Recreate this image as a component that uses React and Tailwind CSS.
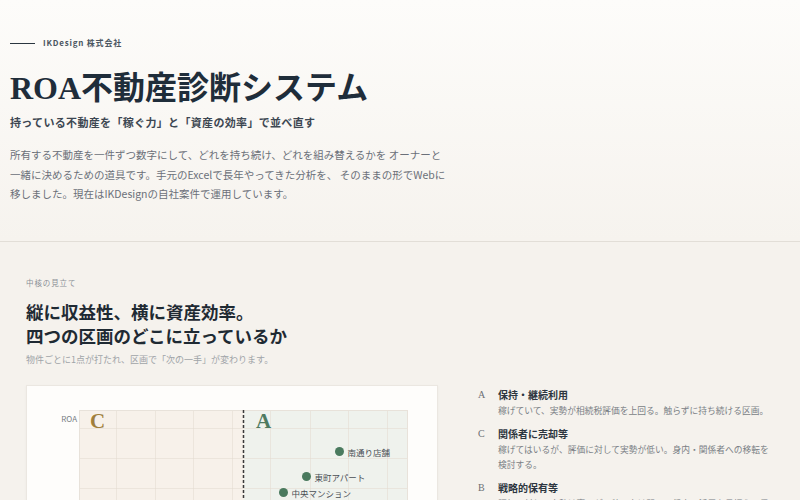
import React from 'react'

const sans = { fontFamily: '"Noto Sans CJK JP", "Noto Sans", sans-serif' }

const points = [
  { name: '南通り店舗', x: 260, y: 42 },
  { name: '東町アパート', x: 227, y: 67 },
  { name: '中央マンション', x: 204, y: 83 },
]

const legend = [
  { k: 'A', title: '保持・継続利用', desc: '稼げていて、実勢が相続税評価を上回る。触らずに持ち続ける区画。' },
  { k: 'C', title: '関係者に売却等', desc: '稼げてはいるが、評価に対して実勢が低い。身内・関係者への移転を検討する。' },
  { k: 'B', title: '戦略的保有等', desc: '評価に対して実勢は高いが、稼ぐ力は弱い。将来の活用を見据えて保有を判断する。' },
]

const vLines = [37, 76, 114, 153, 191, 231, 269, 308]
const hLines = [18, 48, 78, 108, 138, 168, 198, 228, 258, 288]

function Chart() {
  return (
    <div className="relative w-[329px] h-[300px]">
      <div className="grid grid-cols-2 grid-rows-2 w-full h-full">
        <div className="bg-[#f7f1ea]" />
        <div className="bg-[#eff2ed]" />
        <div className="bg-[#f3f1ee]" />
        <div className="bg-[#f6f3ec]" />
      </div>
      <svg className="absolute inset-0" width="329" height="300">
        {vLines.map((x) => (
          <line key={'v' + x} x1={x + 0.5} x2={x + 0.5} y1="0" y2="300" stroke="#e3dbd0" strokeOpacity="0.55" />
        ))}
        {hLines.map((y) => (
          <line key={'h' + y} x1="0" x2="329" y1={y + 0.5} y2={y + 0.5} stroke="#e3dbd0" strokeOpacity="0.55" />
        ))}
        <rect x="0.5" y="0.5" width="328" height="299" fill="none" stroke="#e8e2da" />
        <line x1="164.5" x2="164.5" y1="0" y2="300" stroke="#3a3a3a" strokeWidth="1.5" strokeDasharray="3 2" />
      </svg>
      <div className="absolute left-[11px] top-[1px] text-[21px] leading-none font-bold text-[#a07f3c]" style={{ fontFamily: '"Liberation Serif", serif' }}>C</div>
      <div className="absolute left-[177px] top-[1px] text-[21px] leading-none font-bold text-[#4f7a60]" style={{ fontFamily: '"Liberation Serif", serif' }}>A</div>
      {points.map((p) => (
        <div key={p.name} className="absolute flex items-center gap-[4px]" style={{ left: p.x - 4.5, top: p.y - 6 }}>
          <span className="w-[9px] h-[9px] rounded-full bg-[#4a7a5e]" />
          <span className="text-[8.5px] leading-[12px] text-[#4a4f55]">{p.name}</span>
        </div>
      ))}
    </div>
  )
}

export default function App() {
  return (
    <div className="w-[800px] h-[500px] overflow-hidden bg-[#f5f2ed]" style={sans}>
      <div className="bg-gradient-to-b from-[#fdfcfa] to-[#f6f3ee] pt-[37px] pb-[37px] px-[10px] border-b border-[#e2ded7]">
        <div className="flex items-center gap-[8px] h-[12px]">
          <span className="w-[25px] h-px bg-[#2b3640]" />
          <span className="text-[8px] font-bold tracking-[0.1em] text-[#4a5560]">IKDesign 株式会社</span>
        </div>
        <h1
          className="mt-[19px] text-[32px] leading-[40px] tracking-[0em] font-bold text-[#1f2d3a]"
          style={{ fontFamily: '"Liberation Serif", "Noto Sans CJK JP", serif' }}
        >
          ROA不動産診断システム
        </h1>
        <p className="mt-[6px] text-[11px] leading-[16px] tracking-[0.03em] font-bold text-[#3d4752]">
          持っている不動産を「稼ぐ力」と「資産の効率」で並べ直す
        </p>
        <div className="mt-[15px] text-[10.5px] leading-[19.5px] text-[#6b7079]">
          <p>所有する不動産を一件ずつ数字にして、どれを持ち続け、どれを組み替えるかを オーナーと</p>
          <p>一緒に決めるための道具です。手元のExcelで長年やってきた分析を、 そのままの形でWebに</p>
          <p>移しました。現在はIKDesignの自社案件で運用しています。</p>
        </div>
      </div>

      <div className="px-[26px] pt-[35px]">
        <p className="text-[7.5px] leading-[12px] tracking-[0.12em] text-[#8a8f96]">中核の見立て</p>
        <h2
          className="mt-[12px] text-[17.5px] leading-[24px] font-bold text-[#1f2a33]"
          style={{ fontFamily: '"Liberation Serif", "Noto Sans CJK JP", serif' }}
        >
          縦に収益性、横に資産効率。
          <br />
          四つの区画のどこに立っているか
        </h2>
        <p className="mt-[4px] text-[9px] leading-[14px] text-[#a0a4a8]">
          物件ごとに1点が打たれ、区画で「次の一手」が変わります。
        </p>

        <div className="mt-[18px] flex gap-[40px]">
          <div className="w-[412px] shrink-0 bg-[#fefdfb] border border-[#ebe7e1] shadow-[0_1px_3px_rgba(0,0,0,0.04)] pt-[24px] pr-[29px] flex">
            <div className="w-[52px] shrink-0 text-right pr-[2px] text-[8px] leading-[12px] pt-[3px] text-[#777c82]">ROA</div>
            <Chart />
          </div>

          <div className="w-[300px] pt-[3px] flex flex-col gap-[8.5px]">
            {legend.map((l) => (
              <div key={l.k} className="flex">
                <span
                  className="w-[20px] shrink-0 text-[10px] leading-[14px] text-[#6b6f74]"
                  style={{ fontFamily: '"Liberation Serif", serif' }}
                >
                  {l.k}
                </span>
                <div>
                  <p className="text-[10px] leading-[14px] font-bold text-[#2d3640]">{l.title}</p>
                  <p className="mt-[1px] w-[276px] text-[8.75px] leading-[15.5px] text-[#7a7f85]">{l.desc}</p>
                </div>
              </div>
            ))}
          </div>
        </div>
      </div>
    </div>
  )
}
